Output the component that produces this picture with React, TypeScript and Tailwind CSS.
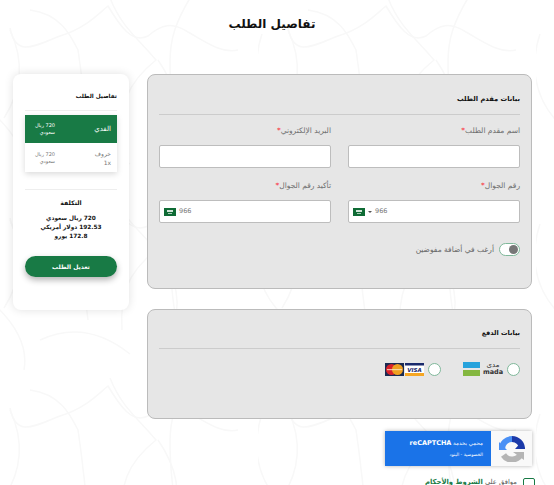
const font = { fontFamily: '"DejaVu Sans", sans-serif' };

function Background() {
  return (
    <svg className="absolute inset-0 h-full w-full" aria-hidden="true">
      <defs>
        <pattern id="arabesque" width="278" height="190" patternUnits="userSpaceOnUse" x="-20" y="-10">
          <g fill="none" stroke="#f8f8f8" strokeWidth="1.5">
            <path d="M50 20c30 4 40 24 48 40 4 26 6 50 10 80" />
            <path d="M30 38c6 30 24 18 50 8 26-8 38-22 48-30 12 20 24 38 40 30 14-12 24-14 40-4 18 10 34 22 50 18" />
            <path d="M130 8c12 30 28 40 46 62-30 24-36 46-34 80" />
            <path d="M178 70c18 26 26 56 12 84" />
            <path d="M210 8c-14 24-20 40-20 64 0 30 4 56 8 82" />
            <path d="M4 44c-10 30-6 60 14 84 20 20 30 40 26 62" />
            <path d="M30 40c14 30 12 60-6 88" />
            <path d="M60 160c30-14 60-10 90 14M180 176c24-20 50-24 90-10" />
          </g>
        </pattern>
      </defs>
      <rect width="100%" height="100%" fill="url(#arabesque)" />
    </svg>
  );
}

function SaudiFlag() {
  return (
    <svg width="12" height="8" viewBox="0 0 12 8" className="shrink-0">
      <rect width="12" height="8" fill="#0f6b35" />
      <rect x="3" y="2" width="6" height="2" fill="#cfe3d6" />
      <rect x="4" y="5" width="4" height="0.8" fill="#cfe3d6" />
    </svg>
  );
}

function TextField({ label }: { label: string }) {
  return (
    <div>
      <label className="block h-[14px] text-[7.5px] leading-[14px] text-[#6e6e6e]">
        {label}
        <span className="text-red-500">*</span>
      </label>
      <div className="mt-[7px] h-[23px] rounded-[2px] border border-[#bdbdbd] bg-white" />
    </div>
  );
}

function PhoneField({ label, arrow }: { label: string; arrow?: boolean }) {
  return (
    <div>
      <label className="block h-[14px] text-[7.5px] leading-[14px] text-[#6e6e6e]">
        {label}
        <span className="text-red-500">*</span>
      </label>
      <div dir="ltr" className="mt-[7px] flex h-[23px] items-center rounded-[2px] border border-[#bdbdbd] bg-white pl-[4px]">
        <SaudiFlag />
        {arrow && <span className="ml-[3px] h-0 w-0 border-x-[2px] border-t-[2px] border-x-transparent border-t-[#555]" />}
        <span className="ml-[3px] text-[6.5px] text-[#777]">966</span>
      </div>
    </div>
  );
}

function Radio() {
  return <span className="block h-[13px] w-[13px] shrink-0 rounded-full border border-[#7fb89a] bg-white" />;
}

function MadaLogo() {
  return (
    <div dir="ltr" className="flex items-center gap-[2px]">
      <div className="flex flex-col gap-[2px]">
        <span className="block h-[6px] w-[17px] bg-[#27a3dc]" />
        <span className="block h-[6px] w-[17px] bg-[#84b740]" />
      </div>
      <div className="flex w-[22px] flex-col items-center text-[#333]">
        <span className="h-[7px] text-[7px] leading-[7px]">مدى</span>
        <span className="h-[7px] text-[6.5px] font-bold leading-[7px]">mada</span>
      </div>
    </div>
  );
}

function CardLogos() {
  return (
    <div dir="ltr" className="flex items-center gap-[1px]">
      <svg width="19" height="13" viewBox="0 0 19 13">
        <rect width="19" height="13" fill="#1b2a52" />
        <circle cx="6.500" cy="6.500" r="5.500" fill="#d9222a" />
        <circle cx="12.500" cy="6.500" r="5.500" fill="#f0a020" />
        <rect x="2" y="6" width="15" height="1.200" fill="#f7e3c0" opacity="0.8" />
      </svg>
      <svg width="19" height="13" viewBox="0 0 19 13">
        <rect width="19" height="13" fill="#fff" />
        <rect width="19" height="2.500" fill="#1a2a6c" />
        <rect y="10" width="19" height="3" fill="#f5a623" />
        <text x="9.500" y="8.600" textAnchor="middle" fontSize="5.500" fontWeight="bold" fontStyle="italic" fill="#1a2a6c" style={font}>
          VISA
        </text>
      </svg>
    </div>
  );
}

function RecaptchaBadge() {
  return (
    <div className="flex h-[35px] w-[147px] shadow-[0_0_4px_rgba(0,0,0,0.3)]">
      <div className="flex w-[41px] items-center justify-center bg-[#f9f9f9]">
        <svg width="26" height="26" viewBox="0 0 26 26" fill="none">
          <path d="M4.500 19a10 10 0 0 0 17.800-2" stroke="#b5b5b5" strokeWidth="6" />
          <path d="M3 13A10 10 0 0 1 13 3" stroke="#4a90f5" strokeWidth="6" />
          <path d="M13 3a10 10 0 0 1 10 10" stroke="#1c3aa9" strokeWidth="6" />
          <path d="M16 13h11l-5.500 -6z" fill="#1c3aa9" />
          <path d="M0 6v8h8z" fill="#4a90f5" />
          <path d="M14 16h11v8z" fill="#b5b5b5" />
        </svg>
      </div>
      <div className="flex flex-1 flex-col items-start justify-center gap-[6px] bg-[#1a73e8] pr-[8px] text-white">
        <span className="text-[5.5px] leading-none">
          محمي بخدمة <b className="text-[6.5px]">reCAPTCHA</b>
        </span>
        <span className="text-[4.5px] leading-none">الخصوصية - البنود</span>
      </div>
    </div>
  );
}

function OrderSidebar() {
  return (
    <aside className="h-[236px] w-[116px] shrink-0 rounded-lg bg-white px-3 text-[#111] shadow-[0_0_10px_rgba(0,0,0,0.12)]">
      <h2 className="mt-[17px] h-[10px] text-[5.7px] font-bold leading-[10px]">تفاصيل الطلب</h2>
      <hr className="mt-[9px] border-[#eee]" />
      <div className="mt-[4px] shadow-[0_2px_6px_rgba(0,0,0,0.15)]">
        <div className="flex h-[28px] items-center justify-between bg-[#187a45] px-[6px] text-white">
          <span className="text-[7px]">الفدي</span>
          <span className="w-[24px] text-[5px] leading-[7px]">720 ريال سعودي</span>
        </div>
        <div className="flex h-[29px] items-center justify-between bg-white px-[6px] text-[#777]">
          <span className="text-[6px] leading-[9px]">
            خروف
            <br />
            1x
          </span>
          <span className="w-[24px] text-[5px] leading-[7px]">720 ريال سعودي</span>
        </div>
      </div>
      <hr className="mt-[17px] border-[#eee]" />
      <div className="mt-[7px] text-center">
        <h3 className="h-[12px] text-[6.2px] font-bold leading-[12px]">التكلفة</h3>
        <p className="mt-[5px] text-[5.8px] font-bold leading-[9px]">
          720 ريال سعودي
          <br />
          192.53 دولار أمريكي
          <br />
          172.8 يورو
        </p>
      </div>
      <button className="mt-[15px] h-[21px] w-full rounded-full bg-[#187a45] text-[6px] font-bold text-white shadow-[0_3px_6px_rgba(0,0,0,0.3)]">
        تعديل الطلب
      </button>
    </aside>
  );
}

export default function App() {
  return (
    <div dir="rtl" style={font} className="relative h-[485px] w-[554px] overflow-hidden bg-white">
      <Background />
      <div className="relative">
        <h1 className="pr-[10px] pl-0 pt-[14px] text-center text-[12px] font-bold leading-[20px] text-[#111]">
          <span className="relative right-0">تفاصيل الطلب</span>
        </h1>
        <div className="mt-[40px] flex gap-[18px] pr-[22px]">
          <main className="w-[385px] shrink-0">
            <section className="h-[215px] rounded-lg border border-[#bbb] bg-[#e6e6e6] px-[11px]">
              <h2 className="mt-[19px] h-[10px] text-[6.7px] font-bold leading-[10px] text-[#111]">بيانات مقدم الطلب</h2>
              <hr className="mt-[10px] border-[#ccc]" />
              <div className="mt-[9px] grid grid-cols-2 gap-x-[17px] gap-y-[11px]">
                <TextField label="اسم مقدم الطلب" />
                <TextField label="البريد الإلكتروني" />
                <PhoneField label="رقم الجوال" arrow />
                <PhoneField label="تأكيد رقم الجوال" />
              </div>
              <div className="mt-[20px] flex items-center gap-[5px]">
                <span dir="ltr" className="flex h-[13px] w-[21px] items-center justify-end rounded-full border border-[#7fb89a] bg-white pr-[1.5px]">
                  <span className="block h-[9px] w-[9px] rounded-full bg-[#777]" />
                </span>
                <span className="text-[7.5px] text-[#666]">أرغب في أضافة مفوضين</span>
              </div>
            </section>
            <section className="mt-[20px] h-[110px] rounded-lg border border-[#bbb] bg-[#e6e6e6] px-[11px]">
              <h2 className="mt-[18px] h-[10px] text-[6.5px] font-bold leading-[10px] text-[#111]">بيانات الدفع</h2>
              <hr className="mt-[10px] border-[#ccc]" />
              <div className="mt-[13px] flex items-center gap-[22px]">
                <div className="flex items-center gap-[3px]">
                  <Radio />
                  <MadaLogo />
                </div>
                <div className="flex items-center gap-[4px]">
                  <Radio />
                  <CardLogos />
                </div>
              </div>
            </section>
            <div className="mt-[12px]">
              <RecaptchaBadge />
            </div>
            <div className="mr-[-3px] mt-[12px] flex items-start gap-[6px]">
              <span className="block h-[12px] w-[12px] rounded-[2px] border border-[#187a45] bg-white" />
              <span className="text-[6.8px] leading-[8px] text-[#555]">
                موافق على <b className="text-[#187a45]">الشروط والأحكام</b>
              </span>
            </div>
          </main>
          <OrderSidebar />
        </div>
      </div>
    </div>
  );
}
